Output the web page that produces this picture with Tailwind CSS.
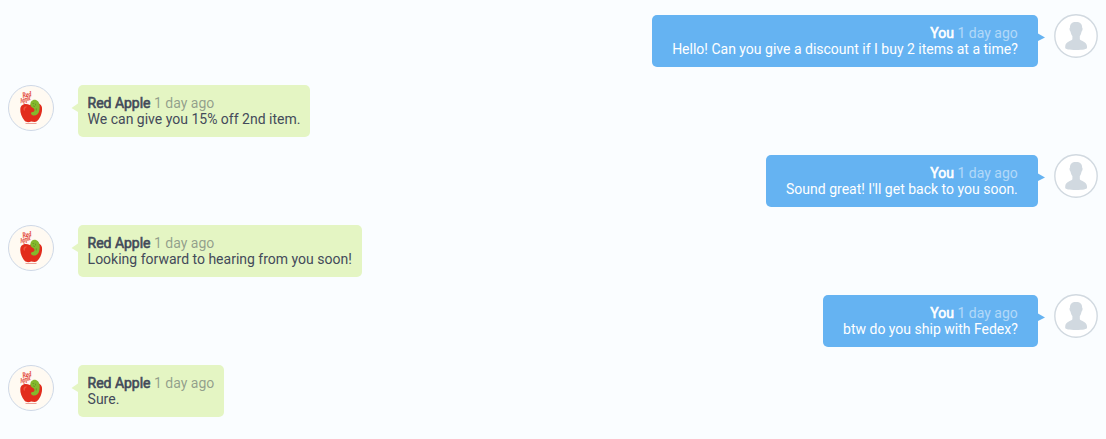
<!DOCTYPE html>
<html lang="en">
<head>
<meta charset="utf-8">
<title>Messages</title>
<script src="https://cdn.jsdelivr.net/npm/@tailwindcss/browser@4"></script>
</head>
<body class="bg-[#fafdff] font-['Roboto',sans-serif] text-sm leading-4 text-[#434a5a] overflow-hidden">
<svg class="hidden">
  <symbol id="apple" viewBox="0 0 46 46">
    <circle cx="23" cy="23" r="22.5" fill="#fffaf2" stroke="#ced8e6"/>
    <g fill="#e0301e" stroke="#e0301e" stroke-width=".2" font-family="Liberation Serif, serif" font-style="italic" font-size="7">
      <text transform="translate(14.8 12.6) rotate(-10)" textLength="9" lengthAdjust="spacingAndGlyphs">Red</text>
      <text transform="translate(12.9 18) rotate(-18)" textLength="10.5" lengthAdjust="spacingAndGlyphs">Apple</text>
    </g>
    <path d="M12.3 24C12.8 18.8 18 18.1 21.8 20.1C25 17.6 32.5 16.3 33.9 22C34.8 28 31.7 34.2 28.5 36.6C26.5 37.6 24.8 36.5 23.2 36.5C21 37.4 18.5 37.6 16.6 35.8C13.8 32.2 12 28 12.3 24Z" fill="#e22c1c"/>
    <path d="M15.6 23c.8-1.8 2.4-1.7 3.5-1.2c-1.5.7-2.4 2.2-2.4 4.2c-1.2-.6-1.5-1.8-1.1-3z" fill="#f0523c"/>
    <path d="M22.5 20.5C21.8 16.3 25 14 28 15C31.7 16.3 32.3 21 31.3 25.5C30.5 29.7 27 31.5 24 30C22.4 29 22.8 27.1 24.5 27C26.5 26.8 27 25 26 23.7C25 22.7 23.3 22.5 22.5 20.5Z" fill="#84b82d"/>
    <path d="M24.6 18.5h1.5M27.5 18.8v1.6M25 20.8l2 .8M28.3 23.3v2.2" stroke="#5b8820" stroke-width=".6" fill="none"/>
    <path d="M17.5 38.5h11" stroke="#e98a7c" stroke-width=".8"/>
  </symbol>
  <symbol id="person" viewBox="0 0 44 44">
    <circle cx="22" cy="22" r="21.2" fill="#fff" stroke="#d1d9e0" stroke-width="1.4"/>
    <path d="M22 8C26.2 8 28.2 10 28.1 13.6C29 14.2 28.6 16.8 27.5 17.7C27.2 19.5 26.6 21 25.8 22V25.2C27 27.3 32.8 27.2 33 32.5V34C33 35 29 36 22 36S11.2 35 11.2 34V32.5C11.4 27.2 17.3 27.3 18.4 25.2V22C17.6 21 16.9 19.5 16.6 17.7C15.5 16.8 15.1 14.2 16 13.6C15.9 10 17.9 8 22 8Z" fill="#d1d9e0"/>
  </symbol>
</svg>
<main class="flex flex-col gap-[18px] pt-[15px]">
  <section class="flex h-[52px] justify-end pr-2">
    <div class="rounded-[5px] bg-[#65b3f2] px-5 py-2.5 text-right text-white"><p><b class="font-normal [-webkit-text-stroke:0.6px]">You</b> <span class="text-white/50">1 day ago</span></p><p>Hello! Can you give a discount if I buy 2 items at a time?</p></div>
    <svg class="mt-[18px] mr-[9.2px] h-2 w-[7px]" viewBox="0 0 7 8"><path d="M0 .5L7 4.5L0 8z" fill="#65b3f2"/></svg>
    <svg class="-mt-px size-11"><use href="#person"/></svg>
  </section>
  <section class="flex h-[52px] pl-2">
    <svg class="size-[46px]"><use href="#apple"/></svg>
    <svg class="mt-[18px] ml-[16.6px] h-[9px] w-[7px]" viewBox="0 0 7 9"><path d="M7 .5L.5 5L7 9z" fill="#e4f5c3"/></svg>
    <div class="rounded-[5px] bg-[#e4f5c3] p-2.5"><p><b class="font-normal tracking-[-0.03px] [-webkit-text-stroke:0.6px]">Red Apple</b> <span class="text-[#434a54]/50">1 day ago</span></p><p>We can give you 15% off 2nd item.</p></div>
  </section>
  <section class="flex h-[52px] justify-end pr-2">
    <div class="rounded-[5px] bg-[#65b3f2] px-5 py-2.5 text-right text-white"><p><b class="font-normal [-webkit-text-stroke:0.6px]">You</b> <span class="text-white/50">1 day ago</span></p><p>Sound great! I'll get back to you soon.</p></div>
    <svg class="mt-[18px] mr-[9.2px] h-2 w-[7px]" viewBox="0 0 7 8"><path d="M0 .5L7 4.5L0 8z" fill="#65b3f2"/></svg>
    <svg class="-mt-px size-11"><use href="#person"/></svg>
  </section>
  <section class="flex h-[52px] pl-2">
    <svg class="size-[46px]"><use href="#apple"/></svg>
    <svg class="mt-[18px] ml-[16.6px] h-[9px] w-[7px]" viewBox="0 0 7 9"><path d="M7 .5L.5 5L7 9z" fill="#e4f5c3"/></svg>
    <div class="rounded-[5px] bg-[#e4f5c3] p-2.5"><p><b class="font-normal tracking-[-0.03px] [-webkit-text-stroke:0.6px]">Red Apple</b> <span class="text-[#434a54]/50">1 day ago</span></p><p>Looking forward to hearing from you soon!</p></div>
  </section>
  <section class="flex h-[52px] justify-end pr-2">
    <div class="rounded-[5px] bg-[#65b3f2] px-5 py-2.5 text-right text-white"><p><b class="font-normal [-webkit-text-stroke:0.6px]">You</b> <span class="text-white/50">1 day ago</span></p><p>btw do you ship with Fedex?</p></div>
    <svg class="mt-[18px] mr-[9.2px] h-2 w-[7px]" viewBox="0 0 7 8"><path d="M0 .5L7 4.5L0 8z" fill="#65b3f2"/></svg>
    <svg class="-mt-px size-11"><use href="#person"/></svg>
  </section>
  <section class="flex h-[52px] pl-2">
    <svg class="size-[46px]"><use href="#apple"/></svg>
    <svg class="mt-[18px] ml-[16.6px] h-[9px] w-[7px]" viewBox="0 0 7 9"><path d="M7 .5L.5 5L7 9z" fill="#e4f5c3"/></svg>
    <div class="rounded-[5px] bg-[#e4f5c3] p-2.5"><p><b class="font-normal tracking-[-0.03px] [-webkit-text-stroke:0.6px]">Red Apple</b> <span class="text-[#434a54]/50">1 day ago</span></p><p>Sure.</p></div>
  </section>
</main>
</body>
</html>
